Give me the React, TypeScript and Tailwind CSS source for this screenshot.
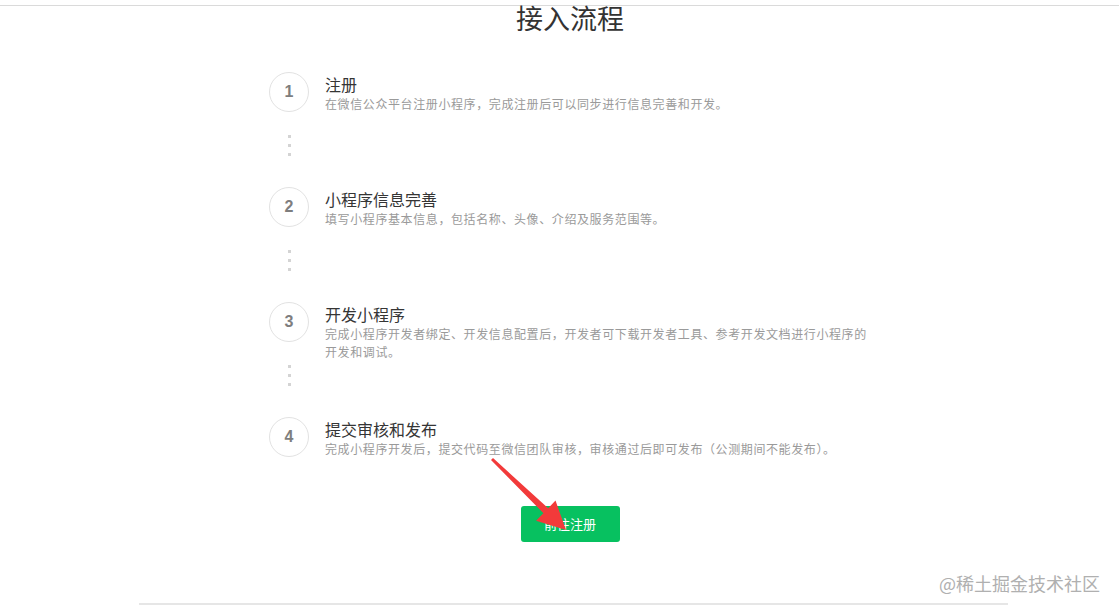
import React from "react";

const steps = [
  { n: "1", title: "注册", desc: "在微信公众平台注册小程序，完成注册后可以同步进行信息完善和开发。" },
  { n: "2", title: "小程序信息完善", desc: "填写小程序基本信息，包括名称、头像、介绍及服务范围等。" },
  { n: "3", title: "开发小程序", desc: "完成小程序开发者绑定、开发信息配置后，开发者可下载开发者工具、参考开发文档进行小程序的开发和调试。" },
  { n: "4", title: "提交审核和发布", desc: "完成小程序开发后，提交代码至微信团队审核，审核通过后即可发布（公测期间不能发布）。" },
];

const cjk = { fontFamily: '"Noto Sans CJK SC", "Noto Sans", sans-serif' };

export default function App() {
  return (
    <div className="relative w-[1120px] h-[612px] overflow-hidden bg-white" style={cjk}>
      <div className="h-[5px]" />
      <div className="h-px w-[1119px] bg-[#dadada]" />
      <div className="-mt-[4px] pl-[20px] text-center text-[27px] leading-[32px] text-[#333]">接入流程</div>

      <div className="ml-[269px] mt-[38px] w-[602px] flex flex-col">
        {steps.map((s, i) => (
          <div key={s.n} className={i < 3 ? "flex h-[115px]" : "flex"}>
            <div className="flex w-[40px] flex-col items-center">
              <div
                className="flex h-[40px] w-[40px] items-center justify-center rounded-full border border-[#e2e2e2] text-[16px] font-bold text-[#7e7e7e]"
                style={{ fontFamily: '"Liberation Sans", Arial, sans-serif' }}
              >
                {s.n}
              </div>
              {i < 3 && (
                <div className="mt-[23px] flex flex-col gap-[6px]">
                  <div className="h-[3px] w-[3px] bg-[#d4d4d4]" />
                  <div className="h-[3px] w-[3px] bg-[#d4d4d4]" />
                  <div className="h-[3px] w-[3px] bg-[#d4d4d4]" />
                </div>
              )}
            </div>
            <div className="ml-[16px] w-[546px] pt-[2px]">
              <div className="text-[16px] leading-[20px] text-[#353535]">{s.title}</div>
              <div className="mt-[1px] text-[12px] leading-[18px] tracking-[0.6px] text-[#9a9a9a]">{s.desc}</div>
            </div>
          </div>
        ))}
      </div>

      <div className="mt-[48px] flex justify-center pl-[20px]">
        <div className="flex h-[36px] w-[99px] items-center justify-center rounded-[3px] bg-[#07c160] text-[13px] text-white">
          前往注册
        </div>
      </div>

      <div className="absolute left-[139px] top-[603px] h-[2px] w-[869px] bg-[#e6e6e6]" />

      <div className="absolute right-[20px] top-[571px] text-[18px] leading-[24px] text-[#b0b0b0]">@稀土掘金技术社区</div>

      <svg className="pointer-events-none absolute left-0 top-0" width="1120" height="612" viewBox="0 0 1120 612">
        <polygon
          points="491,460 493,458 548.2,508.2 555.5,500.6 566,530 536.1,520.8 543.4,513.2"
          fill="#f23a3a"
        />
      </svg>
    </div>
  );
}
